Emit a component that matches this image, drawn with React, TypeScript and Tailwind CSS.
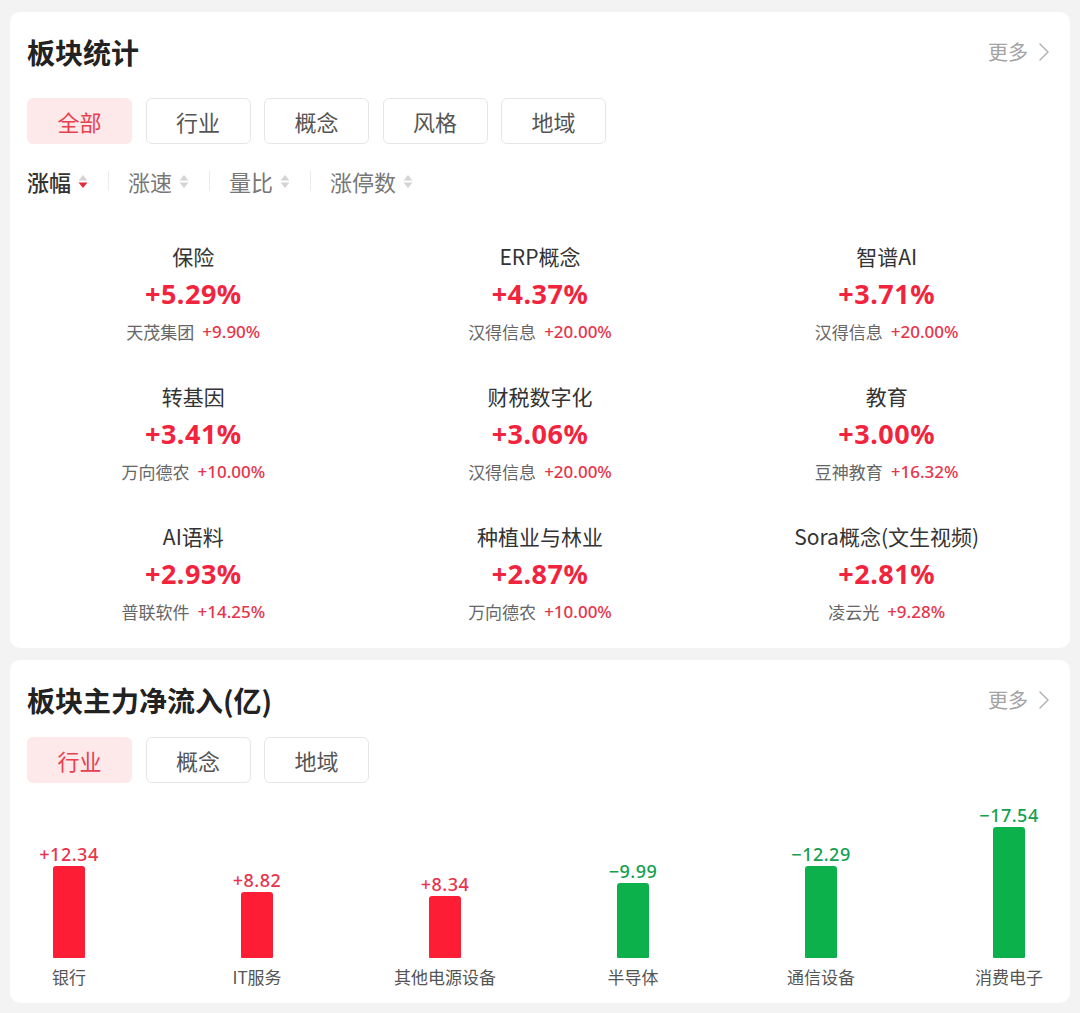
import React from "react";

const CJK = "'Noto Sans CJK SC', 'Noto Sans', sans-serif";
const NUM = "'Noto Sans', 'Noto Sans CJK SC', sans-serif";

function SortIcon({ active }: { active?: boolean }) {
  return (
    <svg width="10" height="15" viewBox="0 0 10 15" className="ml-[7px]">
      <path d="M5 1 L9.5 6.5 L0.5 6.5 Z" fill="#d4d4d4" />
      <path d="M5 14 L9.5 8.5 L0.5 8.5 Z" fill={active ? "#e8283c" : "#d4d4d4"} />
    </svg>
  );
}

function Chevron() {
  return (
    <svg width="12" height="20" viewBox="0 0 12 20" className="ml-[10px]">
      <path d="M2 2 L10 10 L2 18" fill="none" stroke="#b5b5b5" strokeWidth="1.6" strokeLinejoin="round" strokeLinecap="round" />
    </svg>
  );
}

function Header({ title }: { title: string }) {
  return (
    <div className="flex items-center justify-between pl-[17px] pr-[20px]">
      <div className="text-[28px] leading-[32px] font-bold text-[#222]">{title}</div>
      <div className="flex items-center text-[20px] leading-[28px] text-[#a3a3a3]">
        更多
        <Chevron />
      </div>
    </div>
  );
}

function Tabs({ items }: { items: string[] }) {
  return (
    <div className="flex gap-[13.5px] pl-[17px]">
      {items.map((t, i) => (
        <div
          key={t}
          className={
            i === 0
              ? "w-[105px] h-[46px] rounded-[6px] bg-[#fde8ea] text-[#e8404f] flex items-center justify-center text-[22px]"
              : "w-[105px] h-[46px] rounded-[6px] border border-[#e6e6e6] text-[#555] flex items-center justify-center text-[22px]"
          }
        >
          {t}
        </div>
      ))}
    </div>
  );
}

const sectors = [
  { name: "保险", pct: "+5.29%", stock: "天茂集团", sp: "+9.90%" },
  { name: "ERP概念", pct: "+4.37%", stock: "汉得信息", sp: "+20.00%" },
  { name: "智谱AI", pct: "+3.71%", stock: "汉得信息", sp: "+20.00%" },
  { name: "转基因", pct: "+3.41%", stock: "万向德农", sp: "+10.00%" },
  { name: "财税数字化", pct: "+3.06%", stock: "汉得信息", sp: "+20.00%" },
  { name: "教育", pct: "+3.00%", stock: "豆神教育", sp: "+16.32%" },
  { name: "AI语料", pct: "+2.93%", stock: "普联软件", sp: "+14.25%" },
  { name: "种植业与林业", pct: "+2.87%", stock: "万向德农", sp: "+10.00%" },
  { name: "Sora概念(文生视频)", pct: "+2.81%", stock: "凌云光", sp: "+9.28%" },
];

const flows = [
  { name: "银行", v: 12.34 },
  { name: "IT服务", v: 8.82 },
  { name: "其他电源设备", v: 8.34 },
  { name: "半导体", v: -9.99 },
  { name: "通信设备", v: -12.29 },
  { name: "消费电子", v: -17.54 },
];

export default function App() {
  const sorts = ["涨幅", "涨速", "量比", "涨停数"];
  return (
    <div className="w-[1080px] h-[1013px] bg-[#f3f3f3] pt-[12px]" style={{ fontFamily: CJK }}>
      {/* Card 1 */}
      <div className="mx-[10px] bg-white rounded-[10px] pt-[24px] pb-[24px]">
        <Header title="板块统计" />
        <div className="mt-[30px]">
          <Tabs items={["全部", "行业", "概念", "风格", "地域"]} />
        </div>
        <div className="mt-[23px] pl-[17px] flex items-center h-[28px]">
          {sorts.map((s, i) => (
            <React.Fragment key={s}>
              {i > 0 && <div className="w-px h-[20px] bg-[#ececec] ml-[20px] mr-[19px]" />}
              <div className="flex items-center">
                <span className={i === 0 ? "text-[22px] leading-[28px] text-[#333] font-medium" : "text-[22px] leading-[28px] text-[#777]"}>{s}</span>
                <SortIcon active={i === 0} />
              </div>
            </React.Fragment>
          ))}
        </div>
        <div className="mt-[47px] px-[10px] grid grid-cols-3 gap-y-[38px]">
          {sectors.map((s) => (
            <div key={s.name} className="flex flex-col items-center">
              <div className="text-[21px] leading-[28px] text-[#333]">{s.name}</div>
              <div
                className="mt-[7px] text-[27px] leading-[34px] font-bold text-[#f2243d] tracking-[0.5px]"
                style={{ fontFamily: NUM }}
              >
                {s.pct}
              </div>
              <div className="mt-[9px] flex items-center text-[17px] leading-[24px]">
                <span className="text-[#666]">{s.stock}</span>
                <span className="ml-[8px] text-[#e8344a] font-medium" style={{ fontFamily: NUM }}>{s.sp}</span>
              </div>
            </div>
          ))}
        </div>
      </div>

      {/* Card 2 */}
      <div className="mx-[10px] mt-[12px] bg-white rounded-[10px] pt-[24px] pb-[14px]">
        <Header title="板块主力净流入(亿)" />
        <div className="mt-[21px]">
          <Tabs items={["行业", "概念", "地域"]} />
        </div>
        <div className="h-[206px] flex items-end justify-between pl-[17px] pr-[19px]">
          {flows.map((f) => {
            const pos = f.v > 0;
            const h = Math.abs(f.v) * 7.47;
            return (
              <div key={f.name} className="w-[84px] flex flex-col items-center">
                <div
                  className={pos ? "text-[18px] leading-[22px] text-[#e8344a] font-medium tracking-[0.5px]" : "text-[18px] leading-[22px] text-[#13a04f] font-medium tracking-[0.5px]"}
                  style={{ fontFamily: NUM }}
                >
                  {pos ? "+" + f.v.toFixed(2) : "−" + Math.abs(f.v).toFixed(2)}
                </div>
                <div
                  className={pos ? "mt-[1px] w-[32px] rounded-t-[3px] rounded-b-[1px] bg-[#fd1d35]" : "mt-[1px] w-[32px] rounded-t-[3px] rounded-b-[1px] bg-[#0db14b]"}
                  style={{ height: h }}
                />
                <div className="mt-[7px] text-[17px] leading-[24px] text-[#555] whitespace-nowrap">{f.name}</div>
              </div>
            );
          })}
        </div>
      </div>
    </div>
  );
}
